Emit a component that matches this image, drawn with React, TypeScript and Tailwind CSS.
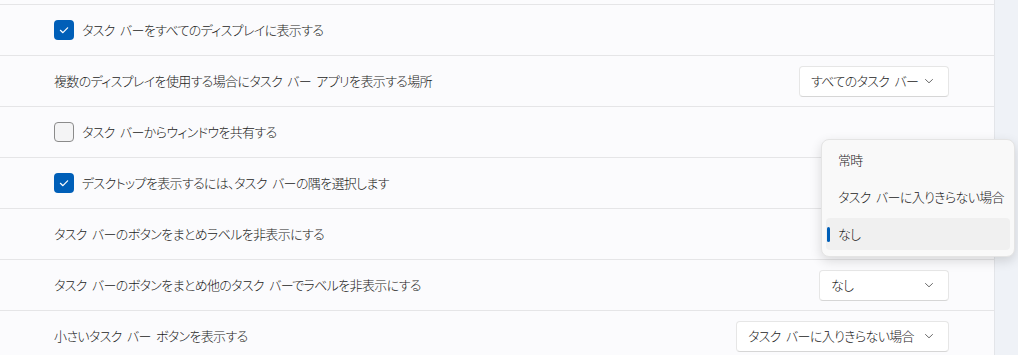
import React from 'react'

// Windows 11 settings – taskbar behaviours, with an open dropdown menu

const FONT = '"Noto Sans CJK JP", "Noto Sans", sans-serif'

type Row =
  | { kind: 'check'; label: string; checked: boolean }
  | { kind: 'select'; label: string; value?: string; width?: string }

const ROWS: Row[] = [
  { kind: 'check', label: 'タスク バーをすべてのディスプレイに表示する', checked: true },
  { kind: 'select', label: '複数のディスプレイを使用する場合にタスク バー アプリを表示する場所', value: 'すべてのタスク バー', width: 'w-[150px]' },
  { kind: 'check', label: 'タスク バーからウィンドウを共有する', checked: false },
  { kind: 'check', label: 'デスクトップを表示するには、タスク バーの隅を選択します', checked: true },
  { kind: 'select', label: 'タスク バーのボタンをまとめラベルを非表示にする' },
  { kind: 'select', label: 'タスク バーのボタンをまとめ他のタスク バーでラベルを非表示にする', value: 'なし', width: 'w-[130px]' },
  { kind: 'select', label: '小さいタスク バー ボタンを表示する', value: 'タスク バーに入りきらない場合', width: 'w-[213px]' },
]

const MENU = ['常時', 'タスク バーに入りきらない場合', 'なし']

const TEXT = 'text-[13px] tracking-[-0.65px] [word-spacing:3px] font-light text-[#1b1b1b] whitespace-nowrap'

function Checkbox({ checked }: { checked: boolean }) {
  if (checked) {
    return (
      <div className="w-[20px] h-[20px] rounded-[4px] bg-[#005fb8] flex items-center justify-center shrink-0">
        <svg width="12" height="12" viewBox="0 0 12 12" fill="none">
          <path d="M2.4 6.3 L4.9 8.7 L9.6 3.8" stroke="#ffffff" strokeWidth="1.2" strokeLinecap="round" strokeLinejoin="round" />
        </svg>
      </div>
    )
  }
  return <div className="w-[20px] h-[20px] rounded-[4px] bg-[#f4f4f5] border border-[#8b8b8b] shrink-0" />
}

function Chevron() {
  return (
    <svg width="10" height="10" viewBox="0 0 10 10" fill="none" className="shrink-0">
      <path d="M1.5 3.5 L5 6.8 L8.5 3.5" stroke="#6b6b6b" strokeWidth="1" strokeLinecap="round" strokeLinejoin="round" />
    </svg>
  )
}

function Select({ value, width }: { value: string; width: string }) {
  return (
    <div
      className={`${width} h-[31px] rounded-[4px] bg-white border border-[#e6e6e6] border-b-[#d6d6d6] flex items-center justify-between pl-[11px] pr-[14px]`}
    >
      <span className={TEXT}>{value}</span>
      <Chevron />
    </div>
  )
}

export default function App() {
  return (
    <div
      className="relative w-[1018px] h-[355px] overflow-hidden flex bg-[#eff2f7]"
      style={{ fontFamily: FONT, fontFeatureSettings: '"palt"' }}
    >
      {/* Settings panel */}
      <div className="w-[995px] shrink-0 bg-[#fbfbfd] border-r border-[#e3e5e9] flex flex-col">
        <div className="h-[4px] shrink-0" />
        {ROWS.map((row, i) => (
          <div
            key={i}
            className="h-[51px] shrink-0 border-t border-[#e5e5e7] flex items-center justify-between pl-[54px] pr-[45px]"
          >
            {row.kind === 'check' ? (
              <div className="flex items-center gap-[8px]">
                <Checkbox checked={row.checked} />
                <span className={TEXT}>{row.label}</span>
              </div>
            ) : (
              <>
                <span className={TEXT}>{row.label}</span>
                {row.value && row.width && <Select value={row.value} width={row.width} />}
              </>
            )}
          </div>
        ))}
      </div>

      {/* Open dropdown menu */}
      <div className="absolute left-[821px] top-[139px] w-[194px] rounded-[8px] bg-[#f9f9f9] border border-[#e4e4e4] shadow-[0_4px_12px_rgba(0,0,0,0.14)] flex flex-col gap-[5px] px-[4px] pt-[4px] pb-[6px]">
        {MENU.map((item, i) => {
          const selected = i === MENU.length - 1
          return (
            <div
              key={item}
              className={`relative h-[32px] rounded-[4px] flex items-center pl-[12px] ${selected ? 'bg-[#f0f0f0]' : ''}`}
            >
              {selected && <div className="absolute left-[1px] top-[9px] w-[3px] h-[15px] rounded-full bg-[#005fb8]" />}
              <span className={TEXT}>{item}</span>
            </div>
          )
        })}
      </div>
    </div>
  )
}
